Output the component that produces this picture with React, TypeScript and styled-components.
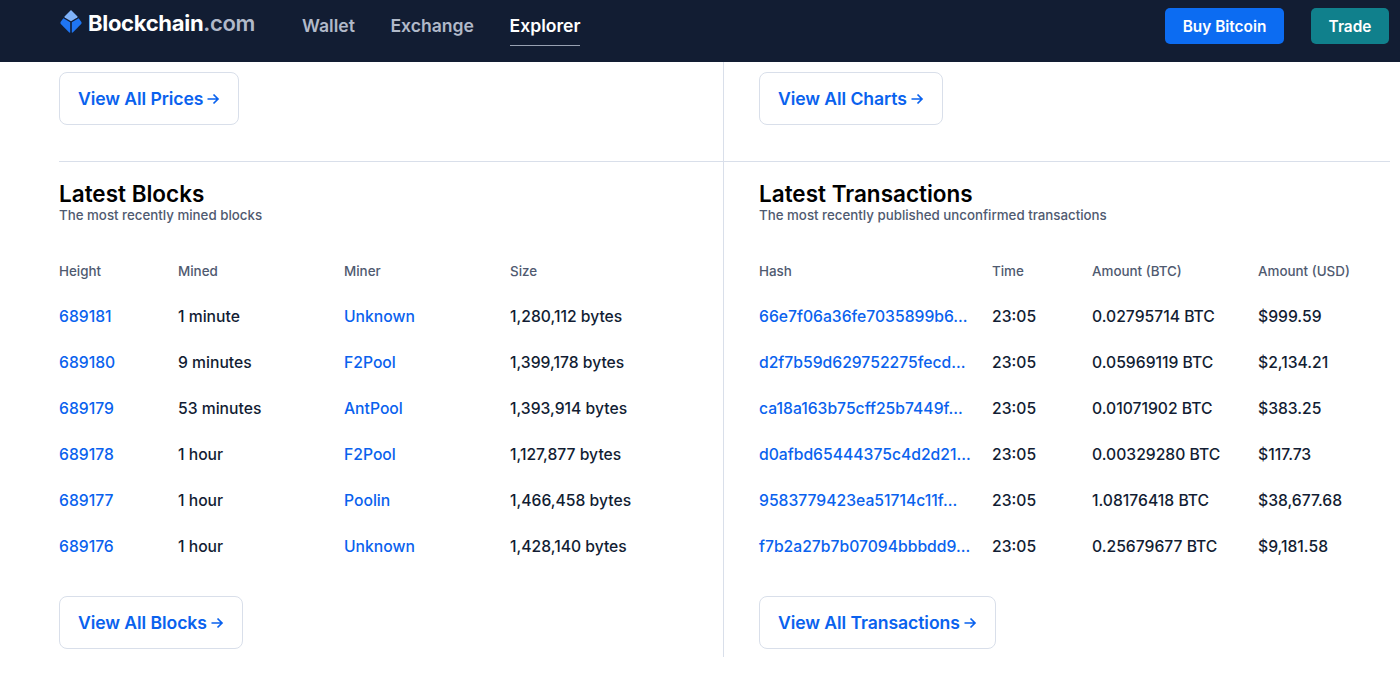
import React from "react";
import styled, { createGlobalStyle } from "styled-components";

const Global = createGlobalStyle`
  html, body { margin: 0; padding: 0; background: #fff; overflow: hidden; }
  body { font-family: Inter, "Liberation Sans", sans-serif; }
`;
const Page = styled.div`width: 1400px; height: 675px; overflow: hidden; background: #fff;`;
const Header = styled.header`
  height: 62px; background: #121d33; display: flex; align-items: flex-start; box-sizing: border-box; padding-left: 59px;
`;
const Brand = styled.div`display: flex; align-items: center; gap: 6px; margin-top: 9px; height: 28px; width: 243px; flex: none;`;
const LogoMark = styled.svg`flex: none; margin: -3px 0 0 1px;`;
const BrandText = styled.span`font-size: 22px; font-weight: 700; color: #fff; letter-spacing: -0.3px; line-height: 28px;`;
const BrandSuffix = styled.span`color: #b1b9c9; font-weight: 600;`;
const Nav = styled.nav`display: flex; gap: 35.5px; flex: 1;`;
const NavItem = styled.a<{ $active?: boolean }>`
  font-size: 17.6px; font-weight: 600; line-height: 24px; padding: 14px 0 7px; color: ${p => (p.$active ? "#fff" : "#b1b9c9")};
  border-bottom: 1px solid ${p => (p.$active ? "#98a1b2" : "transparent")};
`;
const Actions = styled.div`display: flex; gap: 27px; margin-top: 8px; padding-right: 11px;`;
const HeadBtn = styled.button<{ $bg: string; $w: number }>`
  height: 36px; width: ${p => p.$w}px; background: ${p => p.$bg}; color: #fff; border: 0; border-radius: 5px;
  font: 600 15.4px Inter, sans-serif; padding: 0;
`;
const Main = styled.main`display: grid; grid-template-columns: 724px 666px; height: 595px;`;
const Panel = styled.section<{ $right?: boolean }>`
  box-sizing: border-box;
  ${p => (p.$right ? "" : "border-right: 1px solid #d9dfea; padding-left: 59px;")}
`;
const TopArea = styled.div<{ $right?: boolean }>`
  height: 100px; box-sizing: border-box; padding: 10px 0 0 ${p => (p.$right ? "35px" : "0")}; border-bottom: 1px solid #d9dfea;
`;
const Content = styled.div<{ $right?: boolean }>`padding: 20px 0 0 ${p => (p.$right ? "35px" : "0")};`;
const ViewButton = styled.a`
  display: inline-flex; align-items: center; gap: 3px; box-sizing: border-box; height: 53px; padding: 0 18px;
  border: 1px solid #d9dfea; border-radius: 8px; background: #fff; color: #0a62ee;
  font-size: 17.6px; font-weight: 600; letter-spacing: -0.08px;
`;
const Title = styled.h2`margin: 0; font-size: 22.5px; font-weight: 600; line-height: 24px; color: #000; letter-spacing: 0;`;
const Subtitle = styled.p`margin: 0; font-size: 13.3px; font-weight: 500; line-height: 18px; color: #4f5a70;`;
const Table = styled.div<{ $cols: string }>`
  display: grid; grid-template-columns: ${p => p.$cols}; margin-top: 23px; margin-bottom: 27px; grid-auto-rows: 46px;
  align-items: center; height: 322px;
`;
const HeadCell = styled.div`font-size: 13.4px; font-weight: 500; color: #4f5a70; padding-top: 2px;`;
const Cell = styled.div`font-size: 15.7px; font-weight: 500; color: #121d33; white-space: nowrap;`;
const LinkCell = styled.a`font-size: 15.7px; font-weight: 500; color: #0a62ee; white-space: nowrap;`;

const Arrow = () => (
  <svg width="14" height="14" viewBox="0 0 14 14" fill="none" stroke="currentColor" strokeWidth="1.7">
    <path d="M1.5 7H12M7.5 2.5L12 7l-4.5 4.5" />
  </svg>
);
const Logo = () => (
  <LogoMark width="22" height="23" viewBox="0 0 22 23">
    <path d="M11 0L17.5 6.6Q17.9 7.2 17.3 7.6L11 11.2L4.7 7.6Q4.1 7.2 4.5 6.6Z" fill="#7fb2fa" />
    <path d="M3.4 8.2L10.2 12.3V22.4Q9.8 23 9 22.2L0.8 14Q0 13 0.6 12Z" fill="#1f75f2" />
    <path d="M18.6 8.2L11.8 12.3V22.4Q12.2 23 13 22.2L21.2 14Q22 13 21.4 12Z" fill="#1f75f2" />
  </LogoMark>
);
const View = ({ label }: { label: string }) => <ViewButton>{label}<Arrow /></ViewButton>;

const blocks = [
  ["689181", "1 minute", "Unknown", "1,280,112 bytes"],
  ["689180", "9 minutes", "F2Pool", "1,399,178 bytes"],
  ["689179", "53 minutes", "AntPool", "1,393,914 bytes"],
  ["689178", "1 hour", "F2Pool", "1,127,877 bytes"],
  ["689177", "1 hour", "Poolin", "1,466,458 bytes"],
  ["689176", "1 hour", "Unknown", "1,428,140 bytes"],
];
const txs = [
  ["66e7f06a36fe7035899b6...", "23:05", "0.02795714 BTC", "$999.59"],
  ["d2f7b59d629752275fecd...", "23:05", "0.05969119 BTC", "$2,134.21"],
  ["ca18a163b75cff25b7449f...", "23:05", "0.01071902 BTC", "$383.25"],
  ["d0afbd65444375c4d2d21...", "23:05", "0.00329280 BTC", "$117.73"],
  ["9583779423ea51714c11f...", "23:05", "1.08176418 BTC", "$38,677.68"],
  ["f7b2a27b7b07094bbbdd9...", "23:05", "0.25679677 BTC", "$9,181.58"],
];

export default function App() {
  return (
    <Page>
      <Global />
      <Header>
        <Brand><Logo /><BrandText>Blockchain<BrandSuffix>.com</BrandSuffix></BrandText></Brand>
        <Nav>
          <NavItem>Wallet</NavItem>
          <NavItem>Exchange</NavItem>
          <NavItem $active>Explorer</NavItem>
        </Nav>
        <Actions>
          <HeadBtn $bg="#0c6cf2" $w={119}>Buy Bitcoin</HeadBtn>
          <HeadBtn $bg="#10808c" $w={78}>Trade</HeadBtn>
        </Actions>
      </Header>
      <Main>
        <Panel>
          <TopArea><View label="View All Prices" /></TopArea>
          <Content>
            <Title>Latest Blocks</Title>
            <Subtitle>The most recently mined blocks</Subtitle>
            <Table $cols="119px 166px 166px 1fr">
              {["Height", "Mined", "Miner", "Size"].map(h => <HeadCell key={h}>{h}</HeadCell>)}
              {blocks.map(r => (
                <React.Fragment key={r[0]}>
                  <LinkCell>{r[0]}</LinkCell>
                  <Cell>{r[1]}</Cell>
                  <LinkCell>{r[2]}</LinkCell>
                  <Cell>{r[3]}</Cell>
                </React.Fragment>
              ))}
            </Table>
            <View label="View All Blocks" />
          </Content>
        </Panel>
        <Panel $right>
          <TopArea $right><View label="View All Charts" /></TopArea>
          <Content $right>
            <Title>Latest Transactions</Title>
            <Subtitle>The most recently published unconfirmed transactions</Subtitle>
            <Table $cols="233px 100px 166px 1fr">
              {["Hash", "Time", "Amount (BTC)", "Amount (USD)"].map(h => <HeadCell key={h}>{h}</HeadCell>)}
              {txs.map(r => (
                <React.Fragment key={r[0]}>
                  <LinkCell>{r[0]}</LinkCell>
                  <Cell>{r[1]}</Cell>
                  <Cell>{r[2]}</Cell>
                  <Cell>{r[3]}</Cell>
                </React.Fragment>
              ))}
            </Table>
            <View label="View All Transactions" />
          </Content>
        </Panel>
      </Main>
    </Page>
  );
}
